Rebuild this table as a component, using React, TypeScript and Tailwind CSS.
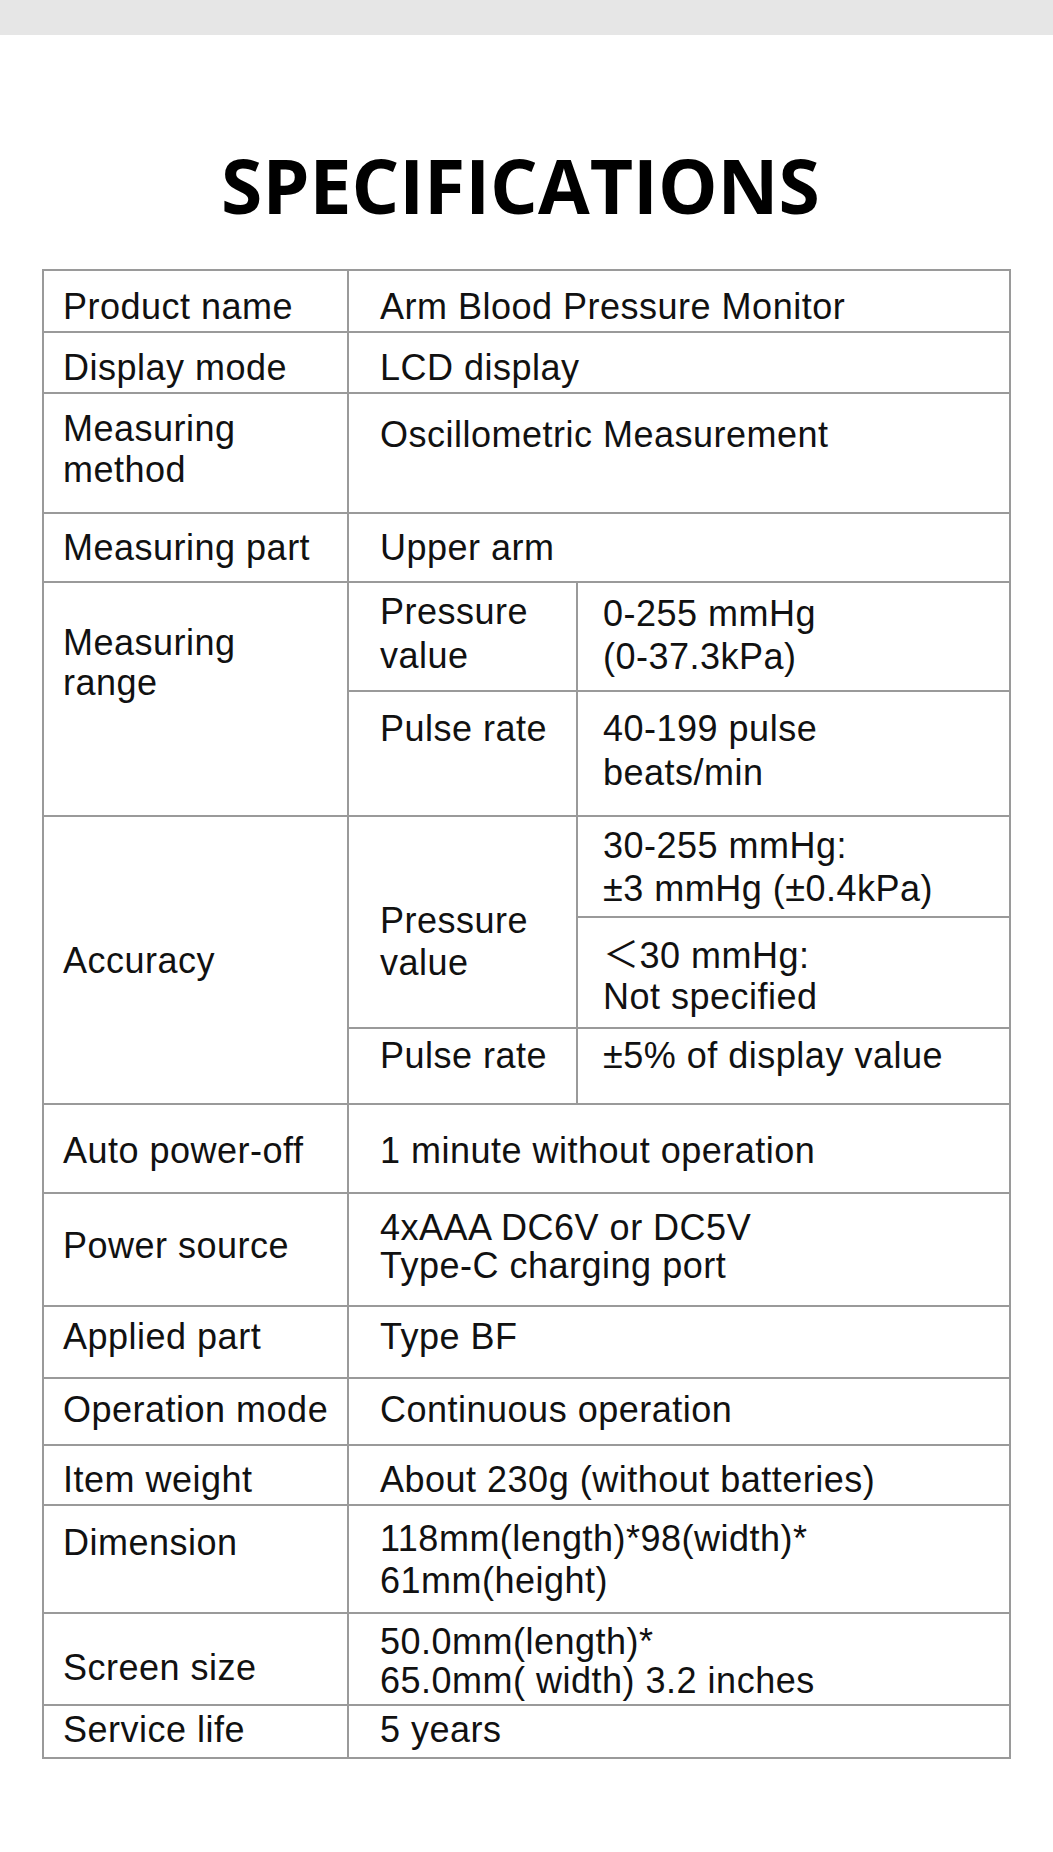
import type { ReactNode } from "react";

const cell = "border-2 border-[#9a9a9a] align-top p-0 whitespace-nowrap";

function Td({ className, children, rowSpan, colSpan }: { className: string; children: ReactNode; rowSpan?: number; colSpan?: number }) {
  return (
    <td rowSpan={rowSpan} colSpan={colSpan} className={`${cell} ${className}`}>
      {children}
    </td>
  );
}

export default function App() {
  return (
    <div className="min-h-[1852px] w-[1053px] bg-white text-[#111]">
      <div className="h-[35px] bg-[#e6e6e6]" />
      <h1 className="mt-[113px] pr-[12px] text-center font-['Open_Sans',sans-serif] text-[75px] font-bold leading-[75px] text-black">
        SPECIFICATIONS
      </h1>
      <table className="ml-[42px] mt-[46px] w-[967px] table-fixed border-collapse font-['Liberation_Sans','Noto_Sans_CJK_SC',Arial,sans-serif] text-[36px] leading-[40px] tracking-[0.5px]">
        <colgroup>
          <col className="w-[305px]" />
          <col className="w-[229px]" />
          <col className="w-[433px]" />
        </colgroup>
        <tbody>
          <tr className="h-[62px]">
            <Td className="pl-[19px] pt-[16px]">Product name</Td>
            <Td colSpan={2} className="pl-[31px] pt-[16px]">Arm Blood Pressure Monitor</Td>
          </tr>
          <tr className="h-[61px]">
            <Td className="pl-[19px] pt-[15px]">Display mode</Td>
            <Td colSpan={2} className="pl-[31px] pt-[15px]">LCD display</Td>
          </tr>
          <tr className="h-[120px]">
            <Td className="pl-[19px] pt-[14px] leading-[41px]">Measuring<br />method</Td>
            <Td colSpan={2} className="pl-[31px] pt-[21px]">Oscillometric Measurement</Td>
          </tr>
          <tr className="h-[69px]">
            <Td className="pl-[19px] pt-[14px]">Measuring part</Td>
            <Td colSpan={2} className="pl-[31px] pt-[14px]">Upper arm</Td>
          </tr>
          <tr className="h-[109px]">
            <Td rowSpan={2} className="pl-[19px] pt-[40px]">Measuring<br />range</Td>
            <Td className="pl-[31px] pt-[7px] leading-[44px]">Pressure<br />value</Td>
            <Td className="pl-[25px] pt-[9px] leading-[43px]">0-255 mmHg<br />(0-37.3kPa)</Td>
          </tr>
          <tr className="h-[125px]">
            <Td className="pl-[31px] pt-[17px]">Pulse rate</Td>
            <Td className="pl-[25px] pt-[15px] leading-[44px]">40-199 pulse<br />beats/min</Td>
          </tr>
          <tr className="h-[101px]">
            <Td rowSpan={3} className="pl-[19px] pt-[124px]">Accuracy</Td>
            <Td rowSpan={2} className="pl-[31px] pt-[83px] leading-[42px]">Pressure<br />value</Td>
            <Td className="pl-[25px] pt-[7px] leading-[43px]">30-255 mmHg:<br />±3 mmHg (±0.4kPa)</Td>
          </tr>
          <tr className="h-[111px]">
            <Td className="pl-[25px] pt-[17px] leading-[41px]">＜30 mmHg:<br />Not specified</Td>
          </tr>
          <tr className="h-[76px]">
            <Td className="pl-[31px] pt-[7px]">Pulse rate</Td>
            <Td className="pl-[25px] pt-[7px]">±5% of display value</Td>
          </tr>
          <tr className="h-[89px]">
            <Td className="pl-[19px] pt-[26px]">Auto power-off</Td>
            <Td colSpan={2} className="pl-[31px] pt-[26px]">1 minute without operation</Td>
          </tr>
          <tr className="h-[113px]">
            <Td className="pl-[19px] pt-[32px]">Power source</Td>
            <Td colSpan={2} className="pl-[31px] pt-[15px] leading-[38px]">4xAAA DC6V or DC5V<br />Type-C charging port</Td>
          </tr>
          <tr className="h-[72px]">
            <Td className="pl-[19px] pt-[10px]">Applied part</Td>
            <Td colSpan={2} className="pl-[31px] pt-[10px]">Type BF</Td>
          </tr>
          <tr className="h-[67px]">
            <Td className="pl-[19px] pt-[11px]">Operation mode</Td>
            <Td colSpan={2} className="pl-[31px] pt-[11px]">Continuous operation</Td>
          </tr>
          <tr className="h-[60px]">
            <Td className="pl-[19px] pt-[14px]">Item weight</Td>
            <Td colSpan={2} className="pl-[31px] pt-[14px]">About 230g (without batteries)</Td>
          </tr>
          <tr className="h-[108px]">
            <Td className="pl-[19px] pt-[17px]">Dimension</Td>
            <Td colSpan={2} className="pl-[31px] pt-[12px] leading-[42px]">118mm(length)*98(width)*<br />61mm(height)</Td>
          </tr>
          <tr className="h-[92px]">
            <Td className="pl-[19px] pt-[34px]">Screen size</Td>
            <Td colSpan={2} className="pl-[31px] pt-[8px] leading-[39px]">50.0mm(length)*<br />65.0mm( width) 3.2 inches</Td>
          </tr>
          <tr className="h-[53px]">
            <Td className="pl-[19px] pt-[4px]">Service life</Td>
            <Td colSpan={2} className="pl-[31px] pt-[4px]">5 years</Td>
          </tr>
        </tbody>
      </table>
    </div>
  );
}
